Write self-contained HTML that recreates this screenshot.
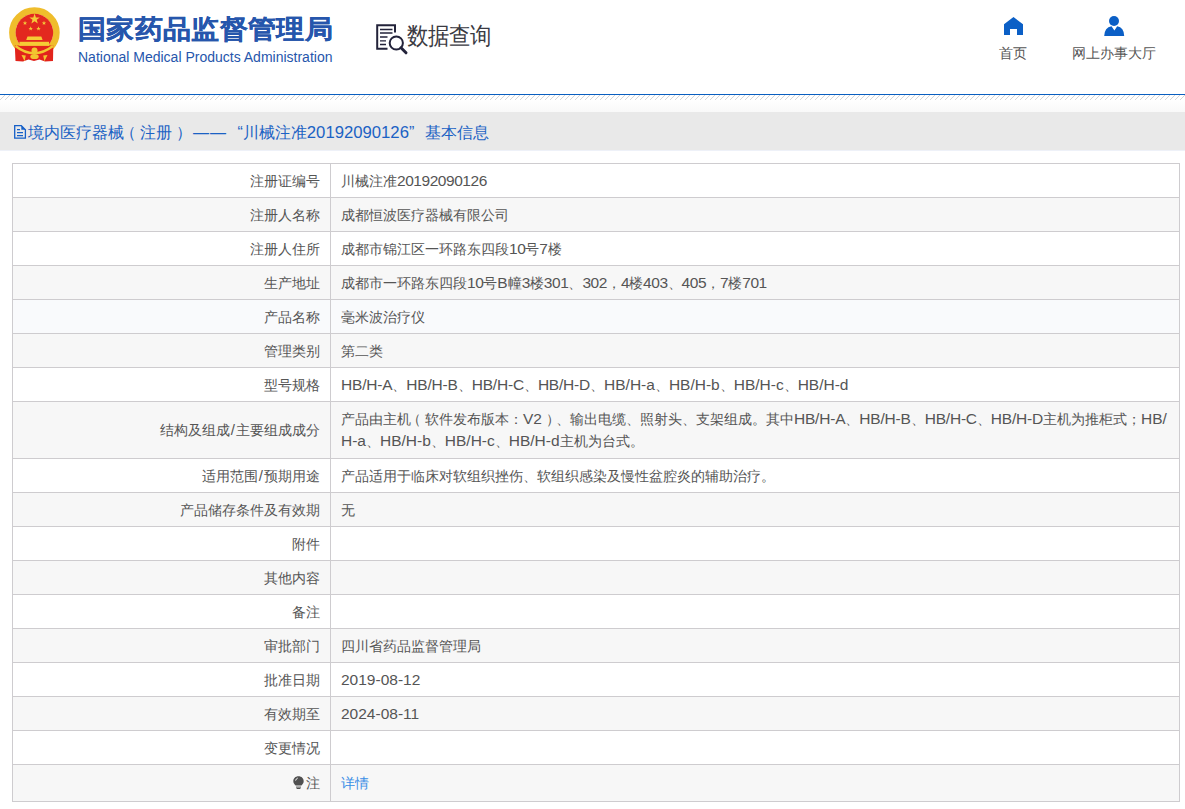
<!DOCTYPE html>
<html><head><meta charset="utf-8">
<style>
*{margin:0;padding:0;box-sizing:border-box}
html,body{width:1185px;height:809px;overflow:hidden;background:#fff;font-family:"Liberation Sans",sans-serif;color:#333}
.a{position:absolute;white-space:nowrap}
#emb{position:absolute;left:8px;top:5px;width:54px;height:58px}
#t1{left:78px;top:14px;font-size:28px;font-weight:bold;color:#2656ac;line-height:34px;letter-spacing:0.35px;transform:scaleY(0.93);transform-origin:0 0;-webkit-text-stroke:0.25px #2656ac}
#t2{left:78px;top:49px;font-size:14px;color:#2656ac;line-height:16px}
#sq{position:absolute;left:375px;top:23px;width:34px;height:32px}
#sqt{left:407px;top:19px;font-size:21px;color:#3a3a42;line-height:30px;transform:scaleY(1.12);transform-origin:0 0}
.nav{position:absolute;top:0;text-align:center;font-size:14px;color:#555;white-space:nowrap}
#line{position:absolute;left:0;top:94px;width:1185px;height:1px;background:#0a5fc0}
#hatch{position:absolute;left:0;top:95px;width:1185px;height:5px}
#grad{position:absolute;left:0;top:100px;width:1185px;height:12px;background:linear-gradient(#fff,#f9f9f9)}
#bar{position:absolute;left:0;top:112px;width:1185px;height:38px;background:#e9e9e9}
.bt{font-size:16px;color:#1b62c4;line-height:22px;top:122px}
table{position:absolute;left:12px;top:163px;width:1168px;border-collapse:collapse;font-size:14px}
td{border:1px solid #cecccf;line-height:22px;color:#555;padding:0}
tr{height:34px}
td.l{width:318px;text-align:right;padding-right:10px}
td.v{padding-left:10px;padding-right:0;white-space:nowrap}
tr:nth-child(even) td{background:#f7f7f7}
tr.hv td{background:#f9fafc}
.e{font-size:15.5px;letter-spacing:0}.d{font-size:15.5px;letter-spacing:-0.45px}.eu{letter-spacing:-0.2px}
.bt .d{font-size:16.7px;letter-spacing:0}
.sl{font-size:15px;padding:0 1px}
.lp{position:relative;left:-4px}.rp{position:relative;left:4px}
</style></head><body>
<svg class="a" style="left:0;top:0" width="70" height="70" viewBox="0 0 70 70">
 <circle cx="34.4" cy="32.6" r="22" fill="none" stroke="#efbd2c" stroke-width="6.6"/>
 <circle cx="34.4" cy="32.6" r="18.8" fill="#e3281f"/>
 <path d="M14.8 45.5 L15.5 61 L23 61.5 L28.5 59.5 L34 61 L39.5 59.5 L45 61.5 L53 61 L53.3 45.5 Z" fill="#e2241c"/>
 <path d="M15.5 46 Q34 60.5 53 46" fill="none" stroke="#f2c630" stroke-width="2.4"/>
 <rect x="19.4" y="41.8" width="29.6" height="4.1" fill="#f5cb35"/>
 <path d="M26.2 40 L27.5 36.5 H41.3 L42.6 40Z" fill="#f5cb35"/>
 <circle cx="34.5" cy="50.5" r="3" fill="#f2c630"/>
 <ellipse cx="34.5" cy="56.5" rx="4.2" ry="2.6" fill="#f2c630"/>
 <path d="M21.5 55 L25.8 55.6 L24.6 61.2Z M47.5 55 L43.2 55.6 L44.4 61.2Z" fill="#f2c630"/>
 <polygon points="34.6,13.6 35.9,17.4 39.8,17.4 36.7,19.7 37.8,23.5 34.6,21.2 31.4,23.5 32.5,19.7 29.4,17.4 33.3,17.4" fill="#f4cb3a"/>
 <polygon points="25,20.8 25.6,22.4 27.2,22.4 25.9,23.4 26.4,25 25,24 23.6,25 24.1,23.4 22.8,22.4 24.4,22.4" fill="#f4cb3a"/>
 <polygon points="44,20.8 44.6,22.4 46.2,22.4 44.9,23.4 45.4,25 44,24 42.6,25 43.1,23.4 41.8,22.4 43.4,22.4" fill="#f4cb3a"/>
 <polygon points="30.7,26.3 31.3,27.9 32.9,27.9 31.6,28.9 32.1,30.5 30.7,29.5 29.3,30.5 29.8,28.9 28.5,27.9 30.1,27.9" fill="#f4cb3a"/>
 <polygon points="38.5,26.3 39.1,27.9 40.7,27.9 39.4,28.9 39.9,30.5 38.5,29.5 37.1,30.5 37.6,28.9 36.3,27.9 37.9,27.9" fill="#f4cb3a"/>
</svg>
<div id="t1" class="a">国家药品监督管理局</div>
<div id="t2" class="a">National Medical Products Administration</div>
<svg id="sq" viewBox="375 23 34 32">
 <path d="M387.5 48.8 H377.2 V25.2 H395 V32.5" fill="none" stroke="#23233a" stroke-width="2"/>
 <path d="M380 29.5H392.5M380 33H392.5M380 37H387.5M380 40.8H386M380 44.5H386" stroke="#23233a" stroke-width="1.3"/>
 <circle cx="396.3" cy="43" r="6.6" fill="none" stroke="#23233a" stroke-width="2"/>
 <path d="M401 47.8 L406 52.8" stroke="#23233a" stroke-width="3" stroke-linecap="round"/>
</svg>
<div id="sqt" class="a">数据查询</div>
<svg class="a" style="left:1004px;top:16px" width="20" height="20" viewBox="1004 16 20 20"><path d="M1013.5 17 L1023 24.3 V35 H1017 V29 H1010 V35 H1004 V24.3Z" fill="#0b5fc6"/></svg>
<div class="a" style="left:999px;top:43px;font-size:14px;color:#555;line-height:20px">首页</div>
<svg class="a" style="left:1103px;top:15px" width="22" height="22" viewBox="1103 15 22 22"><circle cx="1114" cy="21" r="5" fill="#0b5fc6"/><path d="M1104.2 36 Q1104.5 27.5 1111.5 26.3 L1114.4 30.6 L1117.2 26.3 Q1124 27.5 1124.2 36Z" fill="#0b5fc6"/></svg>
<div class="a" style="left:1072px;top:43px;font-size:14px;color:#555;line-height:20px">网上办事大厅</div>
<div id="line"></div>
<svg id="hatch" width="1185" height="5" shape-rendering="crispEdges"><defs><pattern id="hp" width="5" height="5" patternUnits="userSpaceOnUse"><rect x="4" y="0" width="1" height="1" fill="#d6d6d6"/><rect x="3" y="1" width="1" height="1" fill="#d6d6d6"/><rect x="2" y="2" width="1" height="1" fill="#d6d6d6"/><rect x="1" y="3" width="1" height="1" fill="#d6d6d6"/><rect x="0" y="4" width="1" height="1" fill="#d6d6d6"/></pattern></defs><rect width="1185" height="5" fill="url(#hp)"/></svg>
<div id="grad"></div>
<div id="bar"></div><div class="a" style="left:0;top:150px;width:1185px;height:1px;background:#eef1f8"></div>
<svg class="a" style="left:13px;top:124px" width="15" height="16" viewBox="13 124 15 16"><path d="M14.7 125.6 H21.3 L25.4 129.7 V138.2 H14.7Z" fill="none" stroke="#1660c8" stroke-width="1.3"/><path d="M21.3 125.6 V129.7 H25.4Z" fill="#1660c8"/><path d="M17 129.6H20M17 132.6H23M17 135.6H23" stroke="#1660c8" stroke-width="1.1"/></svg>
<div class="a bt" style="left:28px">境内医疗器械<span class="lp">（</span>注册<span class="rp">）</span></div>
<div class="a bt" style="left:193px;letter-spacing:1px">——</div>
<div class="a bt" style="left:237.5px">“川械注准<span class="d">20192090126</span>”</div>
<div class="a bt" style="left:425px">基本信息</div>
<table>
<tr><td class="l">注册证编号</td><td class="v">川械注准<span class="d">20192090126</span></td></tr>
<tr><td class="l">注册人名称</td><td class="v">成都恒波医疗器械有限公司</td></tr>
<tr><td class="l">注册人住所</td><td class="v">成都市锦江区一环路东四段<span class="d">10</span>号<span class="d">7</span>楼</td></tr>
<tr><td class="l">生产地址</td><td class="v">成都市一环路东四段<span class="d">10</span>号<span class="e">B</span>幢<span class="d">3</span>楼<span class="d">301</span>、<span class="d">302</span>，<span class="d">4</span>楼<span class="d">403</span>、<span class="d">405</span>，<span class="d">7</span>楼<span class="d">701</span></td></tr>
<tr class="hv"><td class="l">产品名称</td><td class="v">毫米波治疗仪</td></tr>
<tr><td class="l">管理类别</td><td class="v">第二类</td></tr>
<tr><td class="l">型号规格</td><td class="v"><span class="e eu">HB/H-A</span>、<span class="e eu">HB/H-B</span>、<span class="e eu">HB/H-C</span>、<span class="e eu">HB/H-D</span>、<span class="e">HB/H-a</span>、<span class="e">HB/H-b</span>、<span class="e">HB/H-c</span>、<span class="e">HB/H-d</span></td></tr>
<tr style="height:57px"><td class="l">结构及组成<span class="sl">/</span>主要组成成分</td><td class="v">产品由主机<span class="lp">（</span>软件发布版本：<span class="e">V2</span><span class="rp">）</span>、输出电缆、照射头、支架组成。其中<span class="e eu">HB/H-A</span>、<span class="e eu">HB/H-B</span>、<span class="e eu">HB/H-C</span>、<span class="e eu">HB/H-D</span>主机为推柜式；<span class="e">HB/</span><br><span class="e">H-a</span>、<span class="e">HB/H-b</span>、<span class="e">HB/H-c</span>、<span class="e">HB/H-d</span>主机为台式。</td></tr>
<tr><td class="l">适用范围<span class="sl">/</span>预期用途</td><td class="v">产品适用于临床对软组织挫伤、软组织感染及慢性盆腔炎的辅助治疗。</td></tr>
<tr><td class="l">产品储存条件及有效期</td><td class="v">无</td></tr>
<tr><td class="l">附件</td><td class="v"></td></tr>
<tr><td class="l">其他内容</td><td class="v"></td></tr>
<tr><td class="l">备注</td><td class="v"></td></tr>
<tr><td class="l">审批部门</td><td class="v">四川省药品监督管理局</td></tr>
<tr><td class="l">批准日期</td><td class="v"><span class="e">2019-08-12</span></td></tr>
<tr><td class="l">有效期至</td><td class="v"><span class="e">2024-08-11</span></td></tr>
<tr><td class="l">变更情况</td><td class="v"></td></tr>
<tr style="height:37px"><td class="l"><svg width="11" height="13" viewBox="0 0 11 13" style="vertical-align:-1px;margin-right:2px"><path d="M5.5 0.3 C2.3 0.3 0.3 2.6 0.3 5.2 C0.3 7.3 1.8 8.3 2.6 9.6 H8.4 C9.2 8.3 10.7 7.3 10.7 5.2 C10.7 2.6 8.7 0.3 5.5 0.3Z" fill="#505050"/><rect x="3" y="10.6" width="5" height="1" fill="#505050"/><rect x="3.6" y="12" width="3.8" height="1" fill="#505050"/><path d="M2.6 4.6 Q3 2.6 4.8 2" stroke="#fff" stroke-width="0.9" fill="none"/></svg>注</td><td class="v" style="color:#3a8ee6">详情</td></tr>
</table>
</body></html>
